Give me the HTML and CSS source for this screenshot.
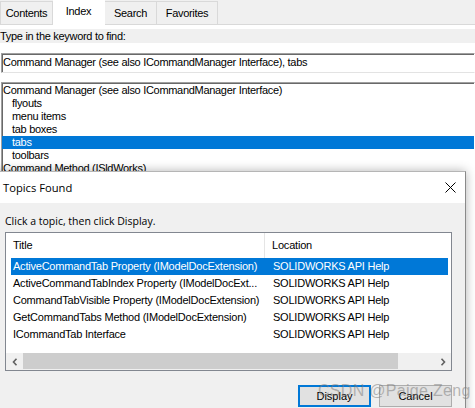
FILE: index.html
```html
<!DOCTYPE html>
<html>
<head>
<meta charset="utf-8">
<link rel="stylesheet" href="styles.css">
</head>
<body>
<div class="app">
  <div class="tabs">
    <div class="tab t-contents">Contents</div>
    <div class="tab active t-index">Index</div>
    <div class="tab t-search">Search</div>
    <div class="tab t-fav">Favorites</div>
    <div class="tab-fill"></div>
  </div>
  <div class="page">
    <div class="label">Type in the keyword to find:</div>
    <div class="input">Command Manager (see also ICommandManager Interface), tabs</div>
    <div class="list">
      <div class="item">Command Manager (see also ICommandManager Interface)</div>
      <div class="item sub">flyouts</div>
      <div class="item sub">menu items</div>
      <div class="item sub">tab boxes</div>
      <div class="item sub selected">tabs</div>
      <div class="item sub">toolbars</div>
      <div class="item">Command Method (ISldWorks)</div>
    </div>
  </div>

  <div class="dialog">
    <div class="titlebar">
      <span class="title">Topics Found</span>
      <svg class="close" width="11" height="11" viewBox="0 0 11 11"><path d="M0.5 0.5 L10.5 10.5 M10.5 0.5 L0.5 10.5" stroke="#000" stroke-width="1" fill="none"/></svg>
    </div>
    <div class="dbody">
      <div class="hint">Click a topic, then click Display.</div>
      <div class="lv">
        <div class="lv-head">
          <div class="col1">Title</div>
          <div class="col2">Location</div>
        </div>
        <div class="lv-row sel"><span class="c1">ActiveCommandTab Property (IModelDocExtension)</span><span class="c2">SOLIDWORKS API Help</span></div>
        <div class="lv-row"><span class="c1">ActiveCommandTabIndex Property (IModelDocExt...</span><span class="c2">SOLIDWORKS API Help</span></div>
        <div class="lv-row"><span class="c1">CommandTabVisible Property (IModelDocExtension)</span><span class="c2">SOLIDWORKS API Help</span></div>
        <div class="lv-row"><span class="c1">GetCommandTabs Method (IModelDocExtension)</span><span class="c2">SOLIDWORKS API Help</span></div>
        <div class="lv-row"><span class="c1">ICommandTab Interface</span><span class="c2">SOLIDWORKS API Help</span></div>
        <div class="lv-spacer"></div>
        <div class="hscroll">
          <div class="sb-btn"><svg width="6" height="8" viewBox="0 0 6 8"><path d="M4.5 0.8 L1.5 4 L4.5 7.2" stroke="#606060" stroke-width="1.6" fill="none"/></svg></div>
          <div class="sb-thumb"></div>
          <div class="sb-track"></div>
          <div class="sb-btn"><svg width="6" height="8" viewBox="0 0 6 8"><path d="M1.5 0.8 L4.5 4 L1.5 7.2" stroke="#606060" stroke-width="1.6" fill="none"/></svg></div>
        </div>
      </div>
      <div class="buttons">
        <div class="btn default">Display</div>
        <div class="btn">Cancel</div>
      </div>
    </div>
  </div>

  <div class="watermark">CSDN @Paige Zeng</div>
</div>
</body>
</html>
```

FILE: styles.css
```css
* { box-sizing: border-box; }
html, body { margin: 0; padding: 0; }
body {
  background: #f0f0f0;
  font-family: "Liberation Sans", Arial, sans-serif;
  font-size: 11px;
  color: #000;
}
.app {
  position: relative;
  width: 475px;
  height: 408px;
  overflow: hidden;
  background: #f0f0f0;
}

/* tabs */
.tabs {
  display: flex;
  align-items: flex-end;
  height: 25px;
}
.tab {
  height: 24px;
  line-height: 23px;
  text-align: center;
  background: #f0f0f0;
  border: 1px solid #d9d9d9;
  border-bottom: 1px solid #d9d9d9;
  font-size: 11px;
  letter-spacing: -0.3px;
}
.t-contents { width: 53px; }
.t-index { width: 52px; }
.t-search { width: 52px; }
.t-fav { width: 61px; border-right: 1px solid #d9d9d9; }
.tab + .tab { border-left: none; }
.tab.active {
  height: 25px;
  line-height: 21px;
  background: #ffffff;
  border-color: #ffffff;
  border-bottom: none;
}
.tab-fill {
  flex: 1;
  height: 1px;
  border-bottom: 1px solid #d9d9d9;
}

/* page */
.page {
  background: #ffffff;
  padding-top: 4px;
  height: 383px;
}
.label {
  background: #f0f0f0;
  height: 14px;
  line-height: 14px;
  font-size: 11px;
  letter-spacing: -0.3px;
}
.input {
  margin-top: 10px;
  margin-left: 1px;
  height: 20px;
  line-height: 16px;
  padding-left: 1px;
  border: 1px solid;
  border-color: #a0a0a0 #ffffff #e3e3e3 #a0a0a0;
  box-shadow: inset 1px 1px 0 #696969;
  font-size: 11px;
  letter-spacing: -0.3px;
  white-space: nowrap;
}
.list {
  margin-top: 9px;
  margin-left: 1px;
  padding-top: 1px;
  border: 1px solid;
  border-color: #a0a0a0 #ffffff #ffffff #a0a0a0;
  box-shadow: inset 1px 1px 0 #696969;
  height: 120px;
}
.item {
  height: 13px;
  line-height: 13px;
  padding-left: 1px;
  font-size: 11px;
  letter-spacing: -0.3px;
  white-space: nowrap;
}
.item.sub { padding-left: 10px; }
.item.selected {
  background: #0078d7;
  color: #fff;
}

/* dialog */
.dialog {
  position: absolute;
  left: -20px;
  top: 171px;
  width: 486px;
  height: 260px;
  background: #f0f0f0;
  border: 1px solid #8a8a8a;
  border-top-color: #b5b5b5;
  box-shadow: 0 0 10px rgba(0, 0, 0, 0.3);
}
.titlebar {
  height: 31px;
  background: #ffffff;
  display: flex;
  align-items: center;
  justify-content: space-between;
  padding-left: 22px;
  padding-right: 9px;
}
.title {
  font-family: "Open Sans", "Noto Sans", sans-serif;
  font-size: 11.2px;
  color: #000;
}
.close { display: block; margin-top: -1px; }
.dbody {
  padding-left: 24px;
}
.hint {
  padding-top: 10px;
  height: 29px;
  line-height: 16px;
  font-family: "Open Sans", "Noto Sans", sans-serif;
  font-size: 10.5px;
}
.lv {
  width: 447px;
  height: 139px;
  border: 1px solid #828790;
  background: #ffffff;
  display: flex;
  flex-direction: column;
}
.lv-head {
  display: flex;
  height: 25px;
  line-height: 24px;
  flex: none;
  letter-spacing: -0.2px;
}
.col1 {
  width: 259px;
  padding-left: 7px;
  border-right: 1px solid #e5e5e5;
}
.col2 { padding-left: 7px; }
.lv-row {
  display: flex;
  height: 17px;
  line-height: 17px;
  margin-left: 5px;
  width: 437px;
  flex: none;
  white-space: nowrap;
  letter-spacing: -0.22px;
}
.lv-row .c1 {
  width: 262px;
  padding-left: 2px;
  overflow: hidden;
}
.lv-row.sel {
  background: #0078d7;
  color: #ffffff;
}
.lv-spacer { flex: 1; }
.hscroll {
  display: flex;
  height: 17px;
  background: #f0f0f0;
  flex: none;
}
.sb-btn {
  width: 17px;
  display: flex;
  align-items: center;
  justify-content: center;
}
.sb-thumb {
  width: 375px;
  background: #cdcdcd;
  margin: 0 0 1px 0;
}
.sb-track { flex: 1; }
.buttons {
  display: flex;
  justify-content: flex-end;
  gap: 8px;
  margin-top: 14px;
  padding-right: 13px;
}
.btn {
  width: 73px;
  height: 22px;
  line-height: 20px;
  text-align: center;
  background: #e1e1e1;
  border: 1px solid #adadad;
}
.btn.default {
  border: 2px solid #0078d7;
  line-height: 18px;
}

.watermark {
  position: absolute;
  left: 318px;
  top: 382px;
  font-size: 16px;
  letter-spacing: 0.3px;
  color: rgba(120, 120, 120, 0.5);
  white-space: nowrap;
  pointer-events: none;
}
```
